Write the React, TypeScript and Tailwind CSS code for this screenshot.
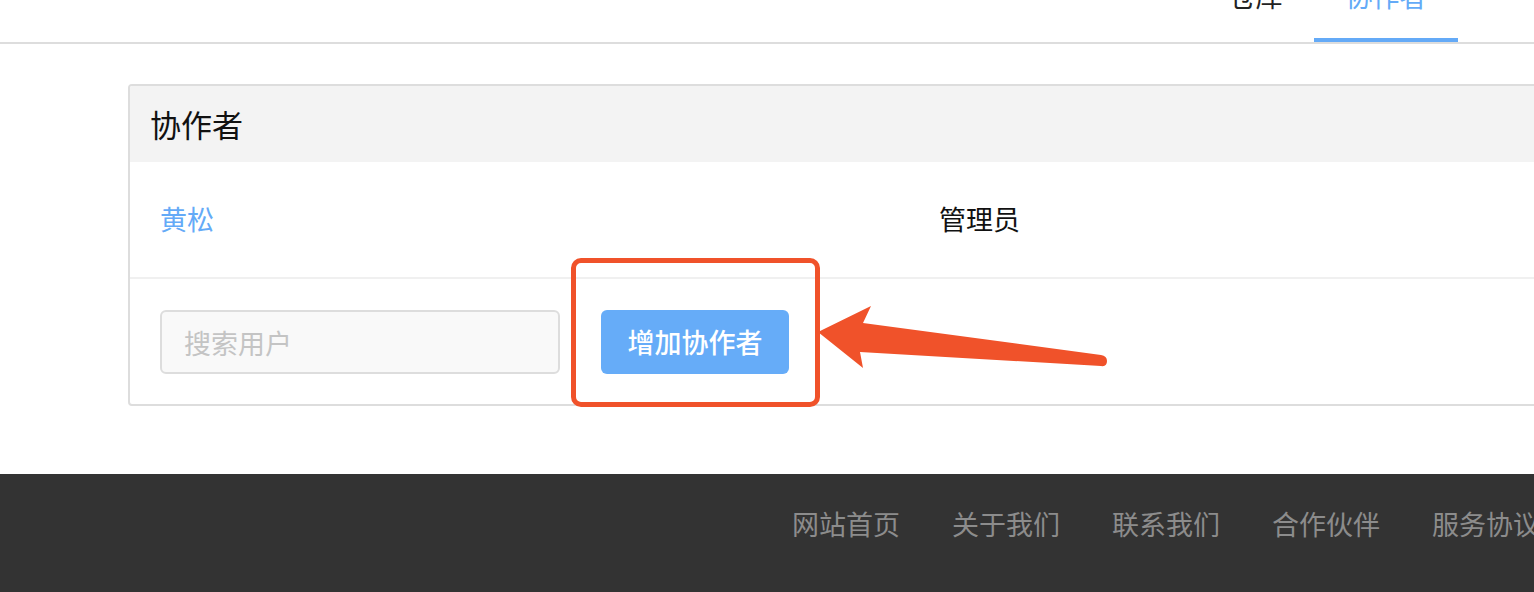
import React from 'react';

const font = { fontFamily: '"Noto Sans CJK SC", "Noto Sans", sans-serif' };

const footerLinks = ['网站首页', '关于我们', '联系我们', '合作伙伴', '服务协议'];

function TopNav() {
  return (
    <div className="h-[44px] border-b-2 border-[#dddddd] flex justify-end pr-[76px]">
      <div className="flex items-end h-[42px]">
        <div className="w-[117px] h-[42px] flex justify-center">
          <span className="block text-[27px] leading-[30px] -mt-[19px] text-[#222]">仓库</span>
        </div>
        <div className="w-[144px] h-[42px] flex flex-col items-center justify-between border-b-4 border-[#64aaf7]">
          <span className="block text-[27px] leading-[30px] -mt-[19px] text-[#64aaf7]">协作者</span>
        </div>
      </div>
    </div>
  );
}

function Collaborators() {
  return (
    <div className="w-[1460px] ml-[128px] mt-[40px] border-2 border-[#dddddd] rounded-[4px] overflow-hidden">
      <div className="h-[76px] bg-[#f3f3f3] flex items-center pl-[20px]">
        <h2 className="text-[31px] text-[#111] font-normal">协作者</h2>
      </div>
      <div className="h-[117px] flex items-center border-b-2 border-[#f0f0f0] pl-[30px]">
        <span className="w-[779px] text-[27px] text-[#64aaf7]">黄松</span>
        <span className="text-[27px] text-[#111]">管理员</span>
      </div>
      <div className="flex items-center gap-[41px] pl-[30px] pt-[31px] pb-[30px]">
        <input
          placeholder="搜索用户"
          className="w-[400px] h-[64px] rounded-[6px] border-2 border-[#dddddd] bg-[#f9f9f9] px-[22px] text-[27px] placeholder:text-[#c4c4c4] outline-none"
        />
        <button className="h-[64px] w-[188px] rounded-[6px] bg-[#66acf8] text-white text-[27px] font-medium">
          增加协作者
        </button>
      </div>
    </div>
  );
}

function Annotation() {
  return (
    <>
      <div className="absolute left-[571px] top-[258px] w-[249px] h-[149px] border-[5px] border-[#f0522a] rounded-[10px]" />
      <svg className="absolute left-0 top-0" width="1534" height="592" viewBox="0 0 1534 592">
        <path
          d="M818 332 L871 306 L863 323 L1101 355 Q1107 356 1107 361 Q1107 367 1101 366 L860 352 L863 368 Z"
          fill="#f0522a"
        />
      </svg>
    </>
  );
}

function Footer() {
  return (
    <div className="mt-[68px] h-[118px] bg-[#333333] flex items-start pt-[32px] pl-[792px] gap-[52px] whitespace-nowrap">
      {footerLinks.map((l) => (
        <a key={l} className="text-[27px] leading-[36px] text-[#8c8c8c]">
          {l}
        </a>
      ))}
    </div>
  );
}

export default function App() {
  return (
    <div className="relative w-[1534px] h-[592px] overflow-hidden bg-white" style={font}>
      <TopNav />
      <Collaborators />
      <Footer />
      <Annotation />
    </div>
  );
}
